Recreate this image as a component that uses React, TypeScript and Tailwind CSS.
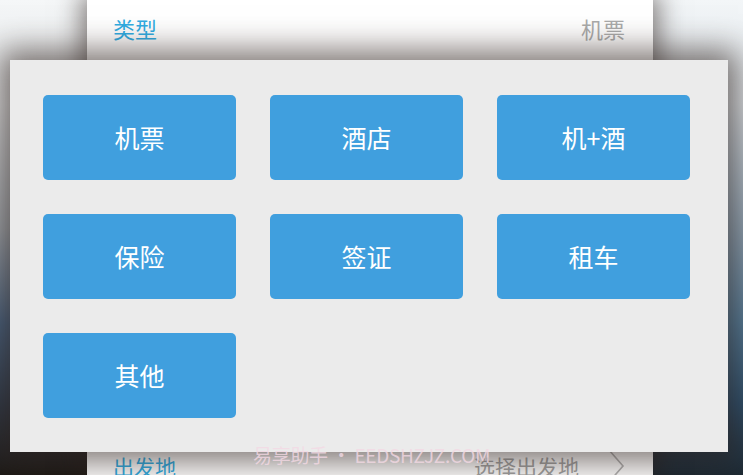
const items = ['机票', '酒店', '机+酒', '保险', '签证', '租车', '其他']

const font = { fontFamily: '"Noto Sans CJK SC", "Noto Sans", sans-serif' }

export default function App() {
  return (
    <div className="relative flex h-[475px] w-[743px] overflow-hidden" style={font}>
      {/* blurred backdrop */}
      <div className="w-[87px] shrink-0 bg-[linear-gradient(to_bottom,#f5f7f8_0%,#e4e7e9_22%,#a9b1b8_48%,#4a6787_68%,#2f3c4c_85%,#1e1a16_100%)]" />

      {/* page card behind the dialog */}
      <div className="relative z-10 flex w-[566px] shrink-0 flex-col bg-white shadow-[0_0_24px_6px_rgba(40,30,25,0.55)]">
        <div className="flex h-[57px] items-center justify-between pl-[26px] pr-[28px] text-[22px]">
          <span className="text-[#30ade4]">类型</span>
          <span className="text-[#ababab]">机票</span>
        </div>
        <div className="flex-1" />
        <div className="flex h-[36px] items-start justify-between pl-[26px] pr-[28px] pt-[12px] text-[21px] leading-[30px]">
          <span className="text-[#30ade4]">出发地</span>
          <span className="flex items-start gap-[28px] text-[#a3a3a3]">
            选择出发地
            <svg width="18" height="36" viewBox="0 0 18 36" className="-mt-[3px]">
              <polyline points="2,2 16,18 2,34" fill="none" stroke="#b4b4b4" strokeWidth="1.6" />
            </svg>
          </span>
        </div>
      </div>

      <div className="flex-1 bg-[linear-gradient(to_bottom,#f3f6f8_0%,#dfe6eb_22%,#8fa7ba_50%,#55809f_68%,#2c5170_85%,#1d2a34_100%)]" />

      {/* type picker dialog */}
      <div className="absolute left-[10px] top-[60px] z-20 h-[392px] w-[718px] bg-[#ebebeb] pl-[33px] pt-[35px] shadow-[0_0_30px_10px_rgba(45,32,28,0.62)]">
        <div className="grid w-[647px] grid-cols-3 gap-x-[34px] gap-y-[34px]">
          {items.map((t) => (
            <button
              key={t}
              className="flex h-[85px] items-center justify-center rounded-[5px] bg-[#409fde] text-[25px] text-white"
            >
              {t}
            </button>
          ))}
        </div>
      </div>

      {/* watermark */}
      <div className="absolute left-[253px] top-[443px] z-30 text-[19px] leading-[24px] tracking-[-0.3px] text-[#f3d9e4]/80">
        易享助手 • EEDSHZJZ.COM
      </div>
    </div>
  )
}
